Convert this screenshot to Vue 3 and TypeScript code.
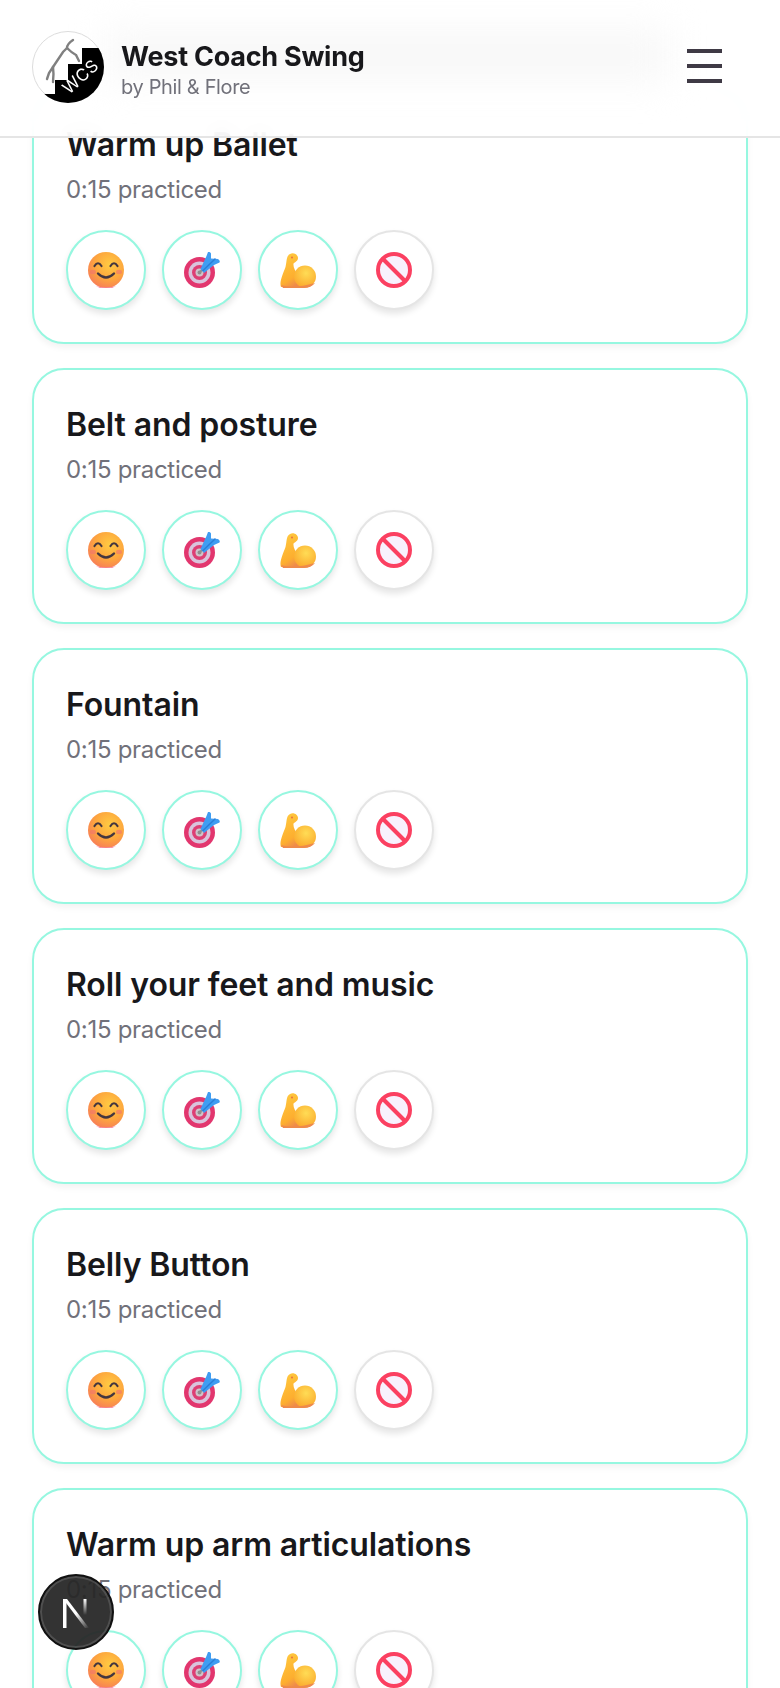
<script setup lang="ts">
interface Exercise {
  title: string;
  practiced: string;
}

interface Rating {
  icon: string;
  label: string;
  off?: boolean;
}

const exercises: Exercise[] = [
  { title: 'Warm up Ballet', practiced: '0:15 practiced' },
  { title: 'Belt and posture', practiced: '0:15 practiced' },
  { title: 'Fountain', practiced: '0:15 practiced' },
  { title: 'Roll your feet and music', practiced: '0:15 practiced' },
  { title: 'Belly Button', practiced: '0:15 practiced' },
  { title: 'Warm up arm articulations', practiced: '0:15 practiced' }
];

const ratings: Rating[] = [
  { icon: '#emoji-smile', label: 'Enjoyed' },
  { icon: '#emoji-target', label: 'Focused' },
  { icon: '#emoji-muscle', label: 'Strong' },
  { icon: '#emoji-no', label: 'Skip', off: true }
];
</script>

<template>
  <div class="page">
    <!-- shared emoji drawings -->
    <svg class="sprites" width="0" height="0" aria-hidden="true">
      <defs>
        <radialGradient id="smile-fill" cx="0.6" cy="0.35" r="0.75">
          <stop offset="0" stop-color="#ffcb42" />
          <stop offset="0.55" stop-color="#fda63e" />
          <stop offset="1" stop-color="#f6755c" />
        </radialGradient>
        <linearGradient id="muscle-fill" x1="0.2" y1="0" x2="0.6" y2="1">
          <stop offset="0" stop-color="#ffc93f" />
          <stop offset="0.75" stop-color="#fdae2f" />
          <stop offset="1" stop-color="#ee8a4c" />
        </linearGradient>
        <radialGradient id="bicep-fill" cx="0.55" cy="0.35" r="0.65">
          <stop offset="0" stop-color="#ffdc55" />
          <stop offset="1" stop-color="#fbab2e" />
        </radialGradient>
        <symbol id="emoji-smile" viewBox="0 0 36 36">
          <circle cx="18" cy="18" r="18" fill="url(#smile-fill)" />
          <path d="M8 34 Q18 37 28 34 L24 36 H12 Z" fill="#f77fa0" />
          <ellipse cx="5" cy="20" rx="3" ry="2.2" fill="#f2736f" opacity="0.6" />
          <ellipse cx="31" cy="20" rx="3" ry="2.2" fill="#f2736f" opacity="0.6" />
          <path d="M6.5 14 Q10 8.5 13.5 14" fill="none" stroke="#43363f" stroke-width="2.2" stroke-linecap="round" />
          <path d="M22.5 14 Q26 8.5 29.5 14" fill="none" stroke="#43363f" stroke-width="2.2" stroke-linecap="round" />
          <path d="M10 21.5 Q18 29.5 26 21.5" fill="none" stroke="#43363f" stroke-width="2.4" stroke-linecap="round" />
        </symbol>
        <symbol id="emoji-target" viewBox="0 0 36 36">
          <circle cx="15.5" cy="20.5" r="15.5" fill="#e2366e" />
          <circle cx="15.5" cy="20.5" r="11" fill="#d9c4dc" />
          <circle cx="15.5" cy="20.5" r="7.5" fill="#dd3f74" />
          <circle cx="15.5" cy="20.5" r="4" fill="#cfc4cc" />
          <circle cx="15.5" cy="20.5" r="2" fill="#8f8f8f" />
          <path d="M15.5 20.5 L22 14" stroke="#8f8f8f" stroke-width="2" stroke-linecap="round" />
          <path d="M16.5 17 L22.5 4 L24 0 Q26 -0.5 27 1.5 L27 6.5 L34 7 Q36.5 8.5 35.5 10.5 L30 13 L20 21 Z" fill="#3f9df2" />
          <path d="M19 18.5 L31 7" stroke="#2a7fd8" stroke-width="1.5" stroke-linecap="round" />
        </symbol>
        <symbol id="emoji-muscle" viewBox="0 0 36 36">
          <path d="M1 35 C-1 30 3 22 5.5 15 C7 9 6 4 10 2 C14 0 18 3 18 6 C18 9 15 10 13.5 11.5 C13 15 15 19 18 23 C22 32 22 35 20 35 Z" fill="url(#muscle-fill)" />
          <circle cx="25" cy="24.5" r="11" fill="url(#bicep-fill)" />
          <path d="M1 33 Q14 37 35 31 Q31 36 24 36 H3 Z" fill="#ee8a4c" />
          <circle cx="12" cy="5.5" r="1" fill="#e8703f" />
        </symbol>
        <symbol id="emoji-no" viewBox="0 0 36 36">
          <circle cx="18" cy="18" r="16" fill="#f8f1fd" stroke="#fb4061" stroke-width="4" />
          <path d="M7 7 L29 29" stroke="#fb4061" stroke-width="4" />
        </symbol>
      </defs>
    </svg>

    <header class="topbar">
      <div class="topbar-smudge"></div>
      <div class="brand">
        <svg class="logo" viewBox="0 0 72 72" width="72" height="72" role="img" aria-label="WCS logo">
          <clipPath id="logo-clip"><circle cx="36" cy="36" r="36" /></clipPath>
          <circle cx="36" cy="36" r="35.5" fill="#fff" stroke="#dcdcdc" />
          <g clip-path="url(#logo-clip)">
            <path d="M72 17 H50 V33 H36 V49 H23 V63 H10 V72 H72 Z" fill="#000" />
            <g class="logo-figures" fill="none" stroke="#808080" stroke-width="2.4" stroke-linecap="round">
              <path d="M41 9 Q35 13 35 17 Q40 22 44 24 L47 30" />
              <path d="M35 17 L31 21 L25 30 L21 36" />
              <path d="M21 36 L17 42 L15 48" />
              <path d="M21 36 Q22 43 21 51" />
            </g>
            <text class="logo-text" x="0" y="0" transform="translate(37 64) rotate(-42)">WCS</text>
          </g>
        </svg>
        <div class="brand-text">
          <div class="brand-name">West Coach Swing</div>
          <div class="brand-sub">by Phil &amp; Flore</div>
        </div>
      </div>
      <button class="menu" type="button" aria-label="Open menu">
        <span></span>
        <span></span>
        <span></span>
      </button>
    </header>

    <main class="list">
      <section v-for="item in exercises" :key="item.title" class="card">
        <h2 class="card-title">{{ item.title }}</h2>
        <p class="card-sub">{{ item.practiced }}</p>
        <div class="ratings">
          <button
            v-for="r in ratings"
            :key="r.icon"
            class="rate"
            :class="{ 'rate-off': r.off }"
            type="button"
            :aria-label="r.label"
          >
            <svg class="emoji" width="36" height="36"><use :href="r.icon" /></svg>
          </button>
        </div>
      </section>
    </main>

    <div class="dev-badge">
      <svg class="dev-n" viewBox="0 0 28 30" width="28" height="30" aria-label="Next.js">
        <defs>
          <linearGradient id="n-diag" x1="0" y1="0" x2="1" y2="1">
            <stop offset="0.5" stop-color="#fff" />
            <stop offset="1" stop-color="#fff" stop-opacity="0" />
          </linearGradient>
          <linearGradient id="n-right" x1="0" y1="0" x2="0" y2="1">
            <stop offset="0" stop-color="#fff" />
            <stop offset="0.8" stop-color="#fff" stop-opacity="0" />
          </linearGradient>
        </defs>
        <path d="M1 0 H4.5 V29 H1 Z" fill="#fff" />
        <path d="M1 0 H5 L27 29 H23 Z" fill="url(#n-diag)" />
        <rect x="21.5" y="0" width="3" height="20" fill="url(#n-right)" />
      </svg>
    </div>
  </div>
</template>

<style scoped>
.page {
  position: relative;
  height: 1688px;
  overflow: hidden;
  background: #fff;
  font-family: Inter, "Liberation Sans", sans-serif;
  color: #18181b;
}

.sprites {
  position: absolute;
}

.topbar {
  position: absolute;
  top: 0;
  left: 0;
  right: 0;
  z-index: 10;
  height: 138px;
  box-sizing: border-box;
  padding: 0 58px 2px 32px;
  display: flex;
  align-items: center;
  justify-content: space-between;
  background: rgba(255, 255, 255, 0.9);
  backdrop-filter: blur(10px);
  border-bottom: 2px solid #e5e5e5;
}

.topbar-smudge {
  position: absolute;
  top: 30px;
  left: 105px;
  width: 565px;
  height: 50px;
  background: #f8f8f8;
  filter: blur(18px);
}

.brand {
  position: relative;
  display: flex;
  align-items: center;
  gap: 17px;
}

.logo {
  display: block;
}

.logo-figures {
  filter: blur(0.5px);
}

.logo-text {
  font-size: 17px;
  letter-spacing: 0.5px;
  fill: #fff;
  font-family: Inter, "Liberation Sans", sans-serif;
}

.brand-text {
  padding-top: 4px;
}

.brand-name {
  font-size: 27px;
  line-height: 36px;
  font-weight: 700;
  letter-spacing: -0.25px;
}

.brand-sub {
  font-size: 20px;
  line-height: 24px;
  letter-spacing: -0.35px;
  color: #71717a;
}

.menu {
  position: relative;
  width: 35px;
  padding: 0;
  margin: 0 0 2px;
  border: 0;
  background: none;
  display: flex;
  flex-direction: column;
  gap: 11px;
}

.menu span {
  height: 4px;
  background: #3f3a45;
}

.list {
  padding: 88px 32px 0;
  display: flex;
  flex-direction: column;
  gap: 24px;
}

.card {
  flex: none;
  height: 256px;
  box-sizing: border-box;
  padding: 32px;
  background: #fff;
  border: 2px solid #96f7e0;
  border-radius: 32px;
  box-shadow: 0 4px 6px rgba(0, 0, 0, 0.05);
}

.card-title {
  margin: 0;
  font-size: 32px;
  line-height: 45px;
  font-weight: 600;
  letter-spacing: -0.1px;
}

.card-sub {
  margin: 5px 0 22px;
  font-size: 24px;
  line-height: 36px;
  letter-spacing: -0.3px;
  color: #71717a;
}

.ratings {
  display: flex;
  gap: 16px;
}

.rate {
  width: 80px;
  height: 80px;
  padding: 0;
  box-sizing: border-box;
  display: flex;
  align-items: center;
  justify-content: center;
  background: #fff;
  border: 2px solid #96f7e0;
  border-radius: 50%;
  box-shadow: 0 4px 6px rgba(0, 0, 0, 0.1);
}

.rate-off {
  border-color: #e5e5e5;
}

.emoji {
  display: block;
}

.dev-badge {
  position: absolute;
  left: 38px;
  top: 1574px;
  z-index: 20;
  width: 76px;
  height: 76px;
  box-sizing: border-box;
  display: flex;
  align-items: center;
  justify-content: center;
  border-radius: 50%;
  background: rgba(38, 38, 38, 0.94);
  border: 2px solid #111;
  box-shadow: inset 0 0 0 2px rgba(255, 255, 255, 0.14);
}

.dev-n {
  margin-top: 3px;
}
</style>

<style>
html,
body {
  margin: 0;
  overflow: hidden;
}
</style>
